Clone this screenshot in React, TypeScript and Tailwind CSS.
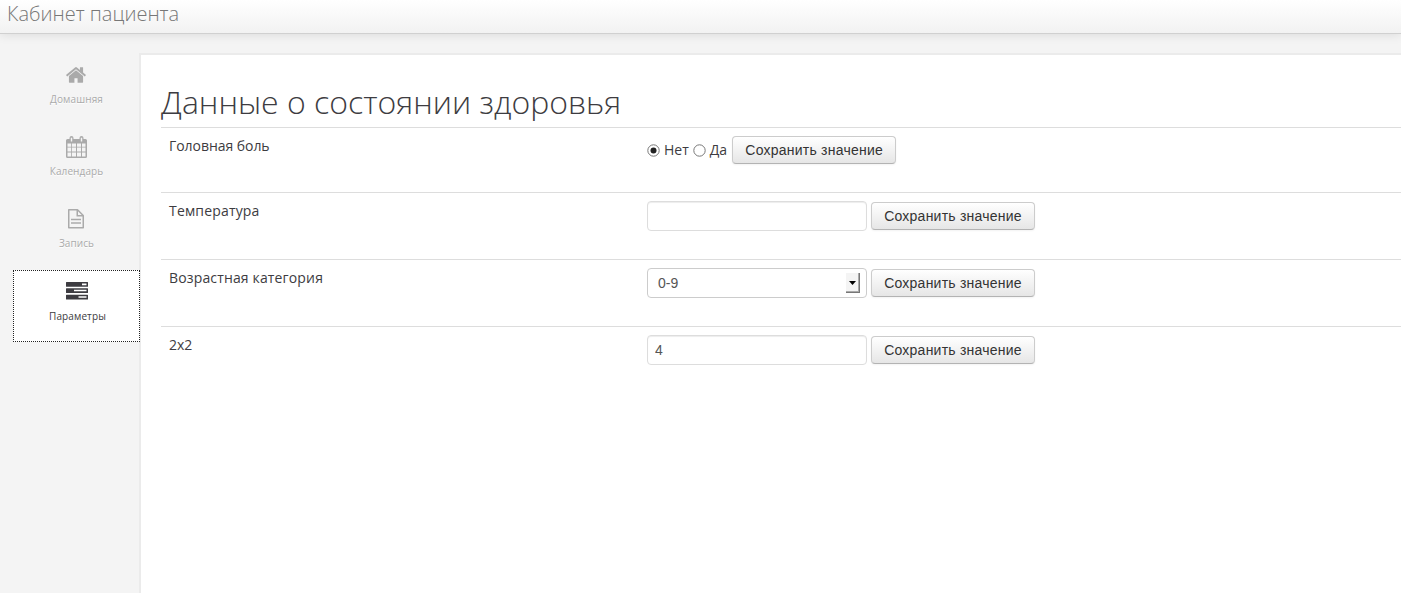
import type { ReactNode } from 'react';

const openSans = "font-['Open_Sans','Noto_Sans',sans-serif]";
const helvetica = "font-['Liberation_Sans',Arial,sans-serif]";

function HomeIcon() {
  return (
    <svg width="22" height="22" viewBox="0 0 1792 1792" fill="currentColor" className="-ml-px shrink-0">
      <path d="M1472 992v480q0 26-19 45t-45 19h-384v-384h-256v384h-384q-26 0-45-19t-19-45v-480q0-1 .5-3t.5-3l575-474 575 474q1 2 1 6zm223-69l-62 74q-8 9-21 11h-3q-13 0-21-7l-692-577-692 577q-12 8-24 7-13-2-21-11l-62-74q-8-10-7-23.5t11-21.5l719-599q32-26 76-26t76 26l244 204v-195q0-14 9-23t23-9h192q14 0 23 9t9 23v408l219 182q10 8 11 21.5t-7 23.5z" />
    </svg>
  );
}

function CalendarIcon() {
  return (
    <svg width="22" height="22" viewBox="0 0 22 22" fill="currentColor" className="shrink-0">
      <path
        fillRule="evenodd"
        d="M1.500 3H3.500V2a2 2 0 0 1 4 0v1h6V2a2 2 0 0 1 4 0v1H19.500A1.500 1.500 0 0 1 21 4.500V20.500A1.500 1.500 0 0 1 19.500 22H1.500A1.500 1.500 0 0 1 0 20.500V4.500A1.500 1.500 0 0 1 1.500 3ZM4.800 1.700v3.800h1.400V1.700ZM14.800 1.700v3.800h1.400V1.700ZM1.500 7.500v3.200h3.700V7.500ZM6 7.500v3.200h4V7.500ZM11 7.500v3.200h4V7.500ZM16 7.500v3.200h3.500V7.500ZM1.500 11.500v4h3.700v-4ZM6 11.500v4h4v-4ZM11 11.500v4h4v-4ZM16 11.500v4h3.500v-4ZM1.500 16.500v4h3.700v-4ZM6 16.500v4h4v-4ZM11 16.500v4h4v-4ZM16 16.500v4h3.500v-4Z"
      />
    </svg>
  );
}

function FileIcon() {
  return (
    <svg width="22" height="22" viewBox="0 0 22 22" fill="none" stroke="currentColor" strokeWidth="1.500" className="shrink-0">
      <path strokeLinejoin="round" d="M2.750 1.750H11.500L17.250 7.500V19.750H2.750Z" />
      <path d="M11.250 2v5.750H17" />
      <path d="M5 11.500h10M5 15h10" />
    </svg>
  );
}

function TasksIcon() {
  return (
    <svg width="22" height="22" viewBox="0 0 22 22" fill="currentColor" className="shrink-0">
      <path
        fillRule="evenodd"
        d="M.500 2h21a.500.500 0 0 1 .500.500v3.700a.500.500 0 0 1-.500.500H.500a.500.500 0 0 1-.500-.500V2.500A.500.500 0 0 1 .500 2ZM16 3.500v1.700h4.500V3.500ZM.500 8.200h21a.500.500 0 0 1 .500.500v3.700a.500.500 0 0 1-.500.500H.500a.500.500 0 0 1-.500-.500V8.700A.500.500 0 0 1 .500 8.200ZM8 9.700v1.500h12.500V9.700ZM.500 14.700h21a.500.500 0 0 1 .500.500v3.700a.500.500 0 0 1-.500.500H.500a.500.500 0 0 1-.500-.500V15.200A.500.500 0 0 1 .500 14.700ZM12.500 16.200v1.600h8v-1.600Z"
      />
    </svg>
  );
}

function NavItem({ icon, label, active }: { icon: ReactNode; label: string; active?: boolean }) {
  return (
    <a
      className={
        'flex h-[72px] w-[127px] flex-col items-start border border-dotted pl-[52px] ' +
        (active
          ? 'relative z-10 mt-px border-[#222] bg-white pt-[9px] text-[#3d3c41]'
          : 'border-transparent pt-[10px] text-[#aaa] [text-shadow:0_1px_0_#fff]')
      }
    >
      {icon}
      <span
        className={
          '-ml-[52px] text-center text-[10px] leading-[16px] tracking-[0.1px] whitespace-nowrap ' +
          (active ? 'mt-[6px] w-[127px]' : 'mt-[5px] w-[125px]')
        }
      >
        {label}
      </span>
    </a>
  );
}

function SaveButton() {
  return (
    <button
      className={`${helvetica} h-7 w-[164px] rounded border border-[#ccc] border-b-[#b3b3b3] bg-linear-to-b from-white to-[#e6e6e6] text-[14px] leading-5 tracking-[0.23px] whitespace-nowrap text-[#333] shadow-[inset_0_1px_0_rgba(255,255,255,0.2),0_1px_2px_rgba(0,0,0,0.05)]`}
    >
      Сохранить значение
    </button>
  );
}

function Radio({ checked }: { checked?: boolean }) {
  return (
    <svg width="13" height="13" viewBox="0 0 13 13" className="mt-px shrink-0">
      <circle cx="6.500" cy="6.500" r="5.700" fill="#fff" stroke="#777" />
      {checked && <circle cx="6.500" cy="6.500" r="3" fill="#222" />}
    </svg>
  );
}

function TextField({ value }: { value: string }) {
  return (
    <input
      defaultValue={value}
      className={`${helvetica} h-[30px] w-[220px] rounded border border-[#ddd] bg-white px-[7px] text-[14px] text-[#555] shadow-[inset_0_1px_1px_rgba(0,0,0,0.075)]`}
    />
  );
}

function SelectField() {
  return (
    <div
      className={`${helvetica} flex h-[30px] w-[220px] items-center justify-between rounded border border-[#ccc] bg-white pr-[6px] pl-[10px] text-[14px] text-[#555]`}
    >
      <span>0-9</span>
      <span className="flex h-[20px] w-[14px] items-center justify-center border-r border-b border-[#777] bg-[#f4f4f4] shadow-[inset_-1px_-1px_0_#aaa]">
        <svg width="7" height="4" viewBox="0 0 7 4">
          <path d="M0 0h7L3.500 4Z" fill="#000" />
        </svg>
      </span>
    </div>
  );
}

function Row({ label, height, tracking = '', children }: { label: string; height: string; tracking?: string; children: ReactNode }) {
  return (
    <div className={`flex ${height} items-start border-t border-[#ddd] pt-2 pl-2`}>
      <div className={`w-[478px] shrink-0 text-[14px] leading-5 ${tracking}`}>{label}</div>
      <div className="flex items-center gap-1">{children}</div>
    </div>
  );
}

export default function App() {
  return (
    <div className={`${openSans} flex h-[593px] w-full flex-col overflow-hidden bg-[#f4f4f4] text-[#3d3c41]`}>
      <header className="z-10 flex h-[34px] shrink-0 border-b border-[#d0d0d0] bg-linear-to-b from-white to-[#f2f2f2] pl-[7px] shadow-[0_1px_10px_rgba(0,0,0,0.1)]">
        <span className="text-[20px] leading-[28px] font-light text-[#777]">Кабинет пациента</span>
      </header>
      <div className="flex min-h-0 flex-1">
        <nav className="w-[139px] shrink-0 pt-[19px] pl-[13px]">
          <NavItem icon={<HomeIcon />} label="Домашняя" />
          <NavItem icon={<CalendarIcon />} label="Календарь" />
          <NavItem icon={<FileIcon />} label="Запись" />
          <NavItem icon={<TasksIcon />} label="Параметры" active />
        </nav>
        <main className="mt-[19px] min-w-0 flex-1 border-t-2 border-l-2 border-[#ebebeb] bg-white pt-[27px] pl-[20px]">
          <h1 className="h-[45px] text-[32px] leading-[40px] font-light whitespace-nowrap">Данные о состоянии здоровья</h1>
          <Row label="Головная боль" height="h-[65px]" tracking="tracking-[-0.05px]">
            <label className="flex items-center gap-1 text-[14px] leading-5">
              <Radio checked />
              Нет
            </label>
            <label className="mr-px flex items-center gap-1 text-[14px] leading-5">
              <Radio />
              Да
            </label>
            <SaveButton />
          </Row>
          <Row label="Температура" height="h-[67px]" tracking="tracking-[0.17px]">
            <TextField value="" />
            <SaveButton />
          </Row>
          <Row label="Возрастная категория" height="h-[67px]" tracking="tracking-[0.15px]">
            <SelectField />
            <SaveButton />
          </Row>
          <Row label="2x2" height="h-[67px]">
            <TextField value="4" />
            <SaveButton />
          </Row>
        </main>
      </div>
    </div>
  );
}
